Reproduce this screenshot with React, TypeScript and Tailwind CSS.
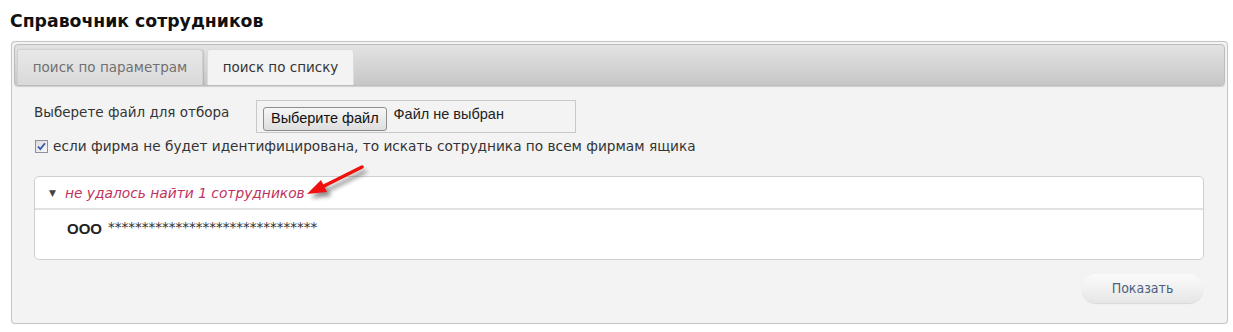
import React from 'react';

const verdana = { fontFamily: '"DejaVu Sans", Verdana, sans-serif' };
const arial = { fontFamily: '"Liberation Sans", Arial, sans-serif' };

const Arrow: React.FC = () => (
  <svg width="80" height="50" viewBox="0 0 80 50" className="absolute left-[298px] top-[158px] pointer-events-none">
    <defs>
      <filter id="sh" x="-50%" y="-50%" width="200%" height="200%">
        <feGaussianBlur stdDeviation="2" />
      </filter>
    </defs>
    <g transform="translate(4,4)" filter="url(#sh)" opacity="0.55">
      <line x1="64" y1="9" x2="22" y2="30" stroke="#333" strokeWidth="3.5" />
      <polygon points="9,36 23,22 29,34" fill="#333" />
    </g>
    <line x1="64" y1="9" x2="22" y2="30" stroke="#f01010" strokeWidth="3.5" strokeLinecap="round" />
    <polygon points="9,36 23,22 29,34" fill="#f01010" />
  </svg>
);

const OldCheckbox: React.FC = () => (
  <span className="w-[13px] h-[13px] border border-[#8f8f9d] bg-gradient-to-br from-[#dcdcdc] to-[#f8f8f8] flex items-center justify-center shrink-0">
    <svg width="9" height="9" viewBox="0 0 9 9">
      <path d="M1 4.5 L3.3 7 L8 1.2" fill="none" stroke="#3858a8" strokeWidth="1.8" />
    </svg>
  </span>
);

export default function App() {
  return (
    <div className="relative w-[1233px] h-[332px] bg-white overflow-hidden">
      <h1 className="pl-[10px] pt-[9px] h-[41px] text-[17.3px] font-bold text-[#111]" style={verdana}>
        Справочник сотрудников
      </h1>

      <div className="ml-[11px] mr-[5px] h-[283px] rounded-[4px] border border-[#c6c6c6] bg-[#f3f3f3] p-[2px] shadow-[0_0_1px_rgba(0,0,0,0.15)] flex flex-col">
        {/* tabs */}
        <div className="h-[42px] rounded-[4px] border border-[#bdbdbd] bg-gradient-to-b from-[#e3e3e3] to-[#c7c7c7] flex items-end pl-[2px] gap-[4px] shadow-[0_1px_1px_rgba(0,0,0,0.15)]">
          <div
            className="h-[36px] w-[186px] rounded-t-[3px] bg-gradient-to-b from-[#e8e8e8] to-[#d9d9d9] border border-b-0 border-[#d0d0d0] flex items-center justify-center text-[13.5px] text-[#707070] shadow-[1px_0_1px_rgba(0,0,0,0.12)]"
            style={verdana}
          >
            поиск по параметрам
          </div>
          <div
            className="h-[36px] w-[147px] rounded-t-[3px] bg-[#f3f3f3] border border-b-0 border-[#dcdcdc] flex items-center justify-center text-[13.5px] text-[#333]"
            style={verdana}
          >
            поиск по списку
          </div>
        </div>

        {/* content */}
        <div className="flex-1 pl-[20px] pr-[21px] pt-[14px] flex flex-col" style={verdana}>
          <div className="flex items-start">
            <span className="w-[222px] text-[13.5px] text-[#333] pt-[2px]">Выберете файл для отбора</span>
            <div className="w-[320px] h-[33px] border border-[#c8c8c8] bg-[#f3f3f3] flex items-center pl-[6px] gap-[7px]" style={arial}>
              <button className="h-[24px] px-[7px] rounded-[3px] border border-[#8e8e8e] bg-gradient-to-b from-[#f6f6f6] to-[#dedede] text-[14.5px] text-[#111] mt-[4px]">
                Выберите файл
              </button>
              <span className="text-[14.5px] text-[#222] -mt-[3px]">Файл не выбран</span>
            </div>
          </div>

          <div className="flex items-center mt-[3px] gap-[5px] pl-[1px]">
            <OldCheckbox />
            <span className="text-[13.7px] text-[#333]">
              если фирма не будет идентифицирована, то искать сотрудника по всем фирмам ящика
            </span>
          </div>

          <div className="mt-[19px] h-[84px] rounded-[5px] border border-[#cfcfcf] bg-white flex flex-col">
            <div className="h-[33px] border-b-2 border-[#e2e2e2] flex items-center pt-[3px] pl-[14px] gap-[9px]">
              <span className="text-[#444] text-[9px] leading-none">▼</span>
              <span className="text-[13.8px] italic text-[#c0325e]">не удалось найти 1 сотрудников</span>
            </div>
            <div className="pl-[32px] pt-[8px] flex items-start gap-[6px]">
              <span className="text-[15px] font-bold text-[#222]" style={arial}>ООО</span>
              <span className="text-[13.5px] text-[#333] -mt-[1px]">*******************************</span>
            </div>
          </div>

          <div className="flex justify-end mt-[14px] pr-[1px]">
            <button
              className="h-[29px] w-[121px] rounded-full bg-gradient-to-b from-[#fbfbfb] to-[#e6e6e6] shadow-[0_1px_1px_rgba(0,0,0,0.12)] text-[14px] text-[#4d6180]"
              style={{ fontFamily: '"DejaVu Sans Condensed", Tahoma, sans-serif' }}
            >
              Показать
            </button>
          </div>
        </div>
      </div>

      <Arrow />
    </div>
  );
}
